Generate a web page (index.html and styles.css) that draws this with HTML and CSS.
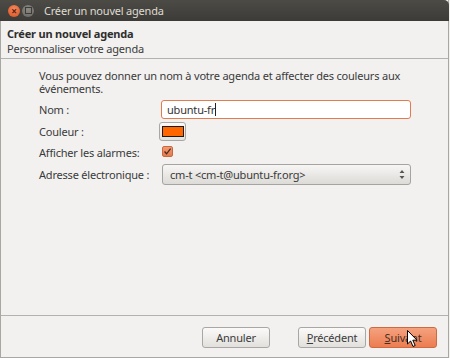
FILE: index.html
```html
<!DOCTYPE html>
<html>
<head>
  <meta charset="utf-8">
  <title>Créer un nouvel agenda</title>
  <link rel="stylesheet" href="styles.css">
</head>
<body>
  <!-- Dialog window -->
  <div class="window">
    <!-- Title bar with window controls -->
    <div class="titlebar">
      <span class="win-btn close">&#215;</span>
      <span class="win-btn max"><span class="max-box"></span></span>
      <span class="win-title">Créer un nouvel agenda</span>
    </div>

    <!-- Wizard page header -->
    <div class="header">
      <div class="header-title">Créer un nouvel agenda</div>
      <div class="header-sub">Personnaliser votre agenda</div>
    </div>

    <!-- Page content -->
    <div class="content">
      <p class="intro">Vous pouvez donner un nom à votre agenda et affecter des couleurs aux événements.</p>

      <div class="form">
        <label>Nom :</label>
        <div class="textfield">ubuntu-fr<span class="caret"></span></div>

        <label>Couleur :</label>
        <div><span class="color-btn"><span class="swatch"></span></span></div>

        <label>Afficher les alarmes:</label>
        <div>
          <span class="checkbox">
            <svg width="9" height="9" viewBox="0 0 9 9"><path d="M1.5 4.5 L3.6 6.8 L7.6 1.6" fill="none" stroke="#4a2b1e" stroke-width="1.3"/></svg>
          </span>
        </div>

        <label>Adresse électronique :</label>
        <div class="select">
          <span>cm-t &lt;cm-t@ubuntu-fr.org&gt;</span>
          <svg width="6" height="11" viewBox="0 0 6 11"><path d="M0.5 4 L3 1 L5.5 4 Z M0.5 7 L3 10 L5.5 7 Z" fill="#555"/></svg>
        </div>
      </div>
    </div>

    <!-- Wizard buttons -->
    <div class="footer">
      <button class="btn">Annuler</button>
      <span class="spacer"></span>
      <button class="btn"><u>P</u>récédent</button>
      <button class="btn btn-default"><u>S</u>uivant</button>
    </div>

    <!-- Mouse pointer over the Suivant button -->
    <svg class="pointer" width="12" height="18" viewBox="0 0 12 18">
      <path d="M0.5 0.5 L0.5 14 L3.6 11 L6 16.5 L8.2 15.5 L5.8 10.2 L10 10.2 Z" fill="#fff" stroke="#000" stroke-width="1"/>
    </svg>
  </div>
</body>
</html>
```

FILE: styles.css
```css
/* Page and window frame */
body {
  margin: 0;
  background: #f2f1f0;
  font-family: "Noto Sans", "DejaVu Sans", sans-serif;
  font-size: 11px;
  letter-spacing: -0.2px;
  color: #3a3a3a;
}

.window {
  position: relative;
  width: 447px;
  height: 357px;
  border-left: 1px solid #a8a7a3;
  border-right: 1px solid #a8a7a3;
  border-bottom: 1px solid #a8a7a3;
  background: #f2f1f0;
  display: flex;
  flex-direction: column;
}

/* Dark title bar */
.titlebar {
  height: 21px;
  margin: 0 -1px;
  background: linear-gradient(#4d4b46, #3c3b37);
  border-top-right-radius: 5px;
  display: flex;
  align-items: center;
  padding-left: 8px;
}

.win-btn {
  width: 12px;
  height: 12px;
  border-radius: 50%;
  display: flex;
  align-items: center;
  justify-content: center;
  margin-right: 2px;
}

.close {
  background: radial-gradient(circle at 50% 35%, #f58a5e, #d8501f);
  color: #5a2010;
  font-size: 10px;
  line-height: 1;
  font-weight: bold;
}

.max {
  background: radial-gradient(circle at 50% 35%, #8c8a85, #66655f);
}

.max-box {
  width: 5px;
  height: 5px;
  border: 1px solid #3d3c38;
}

.win-title {
  margin-left: 8px;
  color: #dfdbd2;
  font-size: 11px;
}

/* Wizard header */
.header {
  padding: 5px 6px 2px;
  line-height: 15px;
  border-bottom: 1px solid #b4b2ad;
}

.header-title {
  font-weight: bold;
  color: #2e2e2e;
}

/* Content area */
.content {
  flex: 1;
  padding: 10px 0 0 38px;
}

.intro {
  margin: 0;
  width: 370px;
  line-height: 13px;
}

.form {
  display: grid;
  grid-template-columns: 121px 251px;
  grid-template-rows: 19px 19px 17px 21px;
  row-gap: 3px;
  margin-top: 5px;
  align-items: center;
}

.form label {
  line-height: 14px;
  white-space: nowrap;
}

/* Name field */
.textfield {
  box-sizing: border-box;
  height: 19px;
  border: 1px solid #e27b4e;
  border-radius: 3px;
  background: #fff;
  padding-left: 5px;
  line-height: 17px;
  color: #333;
  margin-left: 1px;
}

.caret {
  display: inline-block;
  width: 1px;
  height: 13px;
  background: #222;
  vertical-align: -2px;
}

/* Colour picker button */
.color-btn {
  display: flex;
  width: 27px;
  height: 19px;
  box-sizing: border-box;
  border: 1px solid #a9a7a3;
  border-radius: 3px;
  background: linear-gradient(#fbfaf9, #e2e0dc);
  align-items: center;
  justify-content: center;
  margin-left: -1px;
}

.swatch {
  width: 20px;
  height: 9px;
  background: #ff6600;
  border: 1px solid #1a1a1a;
}

/* Alarm checkbox */
.checkbox {
  display: flex;
  width: 11px;
  height: 11px;
  box-sizing: border-box;
  margin: -2px 0 0 2px;
  border: 1px solid #c8683f;
  border-radius: 2px;
  background: linear-gradient(#f29a73, #e47a4c);
  align-items: center;
  justify-content: center;
}

/* Email drop-down */
.select {
  height: 21px;
  box-sizing: border-box;
  margin-left: 2px;
  width: 249px;
  border: 1px solid #a6a4a0;
  border-radius: 3px;
  background: linear-gradient(#f7f6f5, #dddbd7);
  display: flex;
  align-items: center;
  justify-content: space-between;
  padding: 0 5px 0 7px;
}

/* Footer buttons */
.footer {
  border-top: 1px solid #b4b2ad;
  height: 30px;
  padding: 11px 11px 0 0;
  display: flex;
  align-items: flex-start;
}

.spacer {
  width: 28px;
}

.footer .btn:first-child {
  margin-left: auto;
}

.btn {
  width: 68px;
  height: 21px;
  margin-left: 3px;
  border: 1px solid #a9a7a3;
  border-radius: 3px;
  background: linear-gradient(#fbfaf9, #e2e0dc);
  font-family: inherit;
  font-size: 11px;
  letter-spacing: -0.2px;
  color: #3c3c3c;
  padding: 0;
}

.spacer + .btn {
  margin-left: 0;
}

.btn-default {
  border-color: #cd6a42;
  background: linear-gradient(#f5a27e, #ec7c51);
  color: #4a2d22;
}

/* Mouse pointer overlay */
.pointer {
  position: absolute;
  left: 406px;
  top: 330px;
}
```
